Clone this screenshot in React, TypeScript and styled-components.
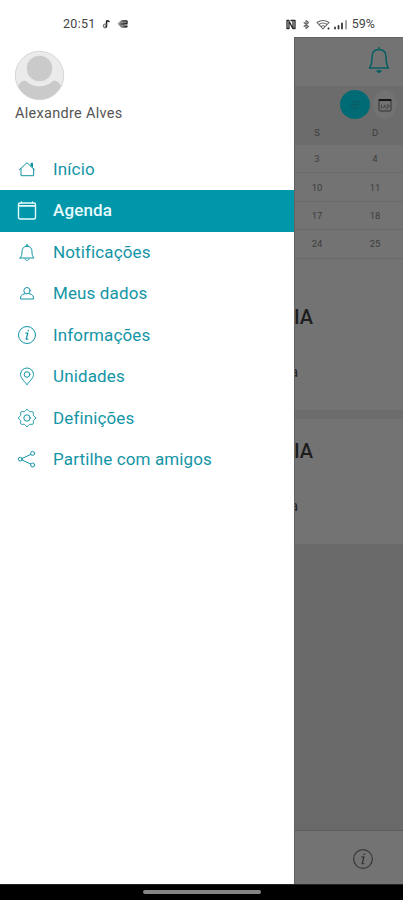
import React from "react";
import styled, { createGlobalStyle } from "styled-components";

const teal = "#1495a6";

const GlobalStyle = createGlobalStyle`
  * { box-sizing: border-box; }
  body { margin: 0; background: #fff; font-family: Roboto, sans-serif; }
`;

const Screen = styled.div`
  width: 403px;
  height: 900px;
  display: grid;
  grid-template-rows: 37px 847px 16px;
  overflow: hidden;
`;

const StatusBar = styled.header`
  display: flex;
  justify-content: space-between;
  align-items: center;
  height: 37px;
  padding: 11px 28px 0 63px;
  font-size: 12.5px;
  color: #444;
`;

const StatusGroup = styled.div`
  display: flex;
  align-items: center;
  height: 26px;
`;

const StatusText = styled.span<{ $spacing: number }>`
  letter-spacing: ${(p) => p.$spacing}px;
  line-height: 26px;
`;

const Body = styled.div`
  display: grid;
  grid-template-columns: 294px 109px;
`;

const Drawer = styled.aside`
  background: #fff;
`;

const Profile = styled.section`
  height: 111.5px;
  padding: 13px 0 0 14px;
`;

const Avatar = styled.svg`
  display: block;
  width: 51px;
  height: 51px;
`;

const UserName = styled.div`
  margin: 3.5px 0 0 1px;
  font-size: 14.5px;
  line-height: 18px;
  letter-spacing: 0.3px;
  color: #555;
`;

const MenuItem = styled.a<{ $active?: boolean }>`
  display: flex;
  align-items: center;
  height: 41.5px;
  padding: 0 0 1px 17px;
  gap: 16px;
  font-size: 17px;
  font-weight: ${(p) => (p.$active ? 500 : 400)};
  letter-spacing: 0.13px;
  color: ${(p) => (p.$active ? "#e8fbfd" : teal)};
  background: ${(p) => (p.$active ? "#0097ab" : "transparent")};
`;

const Icon = styled.svg`
  display: block;
  flex: none;
  fill: none;
  stroke: currentColor;
  stroke-linecap: round;
  stroke-linejoin: round;
`;

const Page = styled.main`
  display: flex;
  flex-direction: column;
  background: #696969;
  border-left: 1px solid #626262;
  overflow: hidden;
`;

const TopBar = styled.div`
  height: 49px;
  flex: none;
  background: #737373;
  border-top: 1px solid #636363;
  display: flex;
  justify-content: flex-end;
  align-items: center;
  padding: 0 11px 5px 0;
  color: #075f63;
`;

const CalendarHead = styled.div`
  height: 59px;
  flex: none;
  background: #6c6c6c;
`;

const CalendarTools = styled.div`
  display: flex;
  height: 37px;
  padding: 4px 0 0 45px;
  gap: 3px;
`;

const ToolButton = styled.div<{ $selected?: boolean }>`
  width: ${(p) => (p.$selected ? 30 : 24)}px;
  height: 29px;
  border-radius: 50%;
  display: grid;
  place-items: center;
  background: ${(p) => (p.$selected ? "#006b75" : "#727272")};
  color: ${(p) => (p.$selected ? "#13575d" : "#333")};
`;

const DayRow = styled.div<{ $height: number; $line?: boolean }>`
  display: grid;
  grid-template-columns: 44px 72px;
  height: ${(p) => p.$height}px;
  flex: none;
  align-items: center;
  text-align: center;
  font-size: 9.5px;
  color: #3d3d3d;
  border-bottom: ${(p) => (p.$line ? "1px solid #6a6a6a" : "none")};
`;

const Calendar = styled.div`
  background: #737373;
  height: 114px;
  flex: none;
`;

const Card = styled.section<{ $height: number; $top: number }>`
  height: ${(p) => p.$height}px;
  flex: none;
  padding-top: ${(p) => p.$top}px;
  background: #737373;
`;

const CardTitle = styled.div`
  margin-left: -1px;
  font-size: 20px;
  font-weight: 500;
  line-height: 24px;
  color: #1d1d1d;
`;

const CardDetail = styled.div`
  margin: 33px 0 0 -5px;
  font-size: 15px;
  line-height: 20px;
  color: #222;
`;

const Divider = styled.div`
  height: 9px;
  flex: none;
  background: #6c6c6c;
`;

const Footer = styled.footer`
  height: 54px;
  margin-top: auto;
  flex: none;
  background: #737373;
  border-top: 1px solid #5d5d5d;
  padding: 17px 0 0 57px;
  color: #383838;
`;

const SystemNav = styled.div`
  background: #000;
  border-top: 1px solid #222;
  display: flex;
  justify-content: center;
  padding-top: 5px;
`;

const HomeHandle = styled.div`
  width: 118px;
  height: 4px;
  border-radius: 2px;
  background: #858585;
`;

type IconName = "home" | "calendar" | "bell" | "user" | "info" | "pin" | "gear" | "share";

const gearPath = Array.from({ length: 65 }, (_, i) => {
  const a = (i * Math.PI) / 32;
  const r = 7.7 + 0.8 * Math.cos(a * 8);
  return `${i ? "L" : "M"}${(10 + r * Math.cos(a)).toFixed(2)} ${(10 + r * Math.sin(a)).toFixed(2)}`;
}).join("") + "Z";

const shapes: Record<IconName, React.ReactNode> = {
  home: <><path d="M2.300 10.800 10 3.700l7.400 7.100M4 9.500v7.200h12.600V9.500" /><path d="M14.200 6.800V4.500h1.200V8" strokeWidth="1.300" /></>,
  calendar: <><rect x="1.500" y="3" width="17" height="16" rx="1.500" strokeWidth="1.400" /><path d="M2 5.800h16" strokeWidth="1.800" /><path d="M4.500 2v1M15.500 2v1" strokeWidth="1.400" /></>,
  bell: <><path d="M3 16h14c-1.600-1.600-2-3-2-6.200 0-3.400-1.700-5.500-5-5.500S5 6.400 5 9.800c0 3.200-.4 4.600-2 6.200ZM9.200 4.100V2.800h1.600v1.300M8 17c.5 2 3.500 2 4 0" /></>,
  user: <><circle cx="10" cy="7.700" r="3.200" /><path d="M7.500 10.800c-3 .5-4.200 2.200-4 5.200h13c.2-3-1-4.700-4-5.200" /></>,
  info: <><circle cx="10" cy="10" r="8.500" /><path d="M9 8.200h1.800l-1.600 6h1.500M11.200 5.500v.3" strokeWidth="1.300" /></>,
  pin: <><path d="M10 18.500C6 14.200 3.500 11.200 3.500 8.500a6.500 6.500 0 0 1 13 0c0 2.700-2.500 5.700-6.500 10Z" /><circle cx="10" cy="8.500" r="2.800" /></>,
  gear: <><path d={gearPath} /><circle cx="10" cy="10" r="3.200" /></>,
  share: <><path d="m5 9.500 8.700-4M5 11l8.700 4" /><circle cx="3.300" cy="10.200" r="1.900" /><circle cx="15.600" cy="4.400" r="2" /><circle cx="15.600" cy="16" r="2" /></>,
};

const LineIcon = ({ name, size = 20, weight = 1 }: { name: IconName; size?: number; weight?: number }) => (
  <Icon viewBox="0 0 20 20" width={size} height={size} strokeWidth={weight}>{shapes[name]}</Icon>
);

const items: { icon: IconName; label: string }[] = [
  { icon: "home", label: "Início" },
  { icon: "calendar", label: "Agenda" },
  { icon: "bell", label: "Notificações" },
  { icon: "user", label: "Meus dados" },
  { icon: "info", label: "Informações" },
  { icon: "pin", label: "Unidades" },
  { icon: "gear", label: "Definições" },
  { icon: "share", label: "Partilhe com amigos" },
];

const weeks = [["3", "4"], ["10", "11"], ["17", "18"], ["24", "25"]];

export default function App() {
  return (
    <>
      <GlobalStyle />
      <Screen>
        <StatusBar>
          <StatusGroup>
            <StatusText $spacing={0.3}>20:51</StatusText>
            <Icon width="34" height="12" viewBox="0 0 34 12">
              <path d="M13 3.500q-2.500-2-2.500 1V8q0 1.500-1.500 1.500" stroke="#222" strokeWidth="1.600" />
              <path d="M10 6.500q-2-1-2.500 1t2 2" stroke="#777" strokeWidth="1.300" />
              <path d="M25.500 2.500H31v7h-5.500L22.500 6Z" fill="#888" stroke="#888" />
              <path d="M27 3h4v2.500h-3M25 6h3M28 8.500h3" stroke="#2d2d2d" strokeWidth="1.200" />
            </Icon>
          </StatusGroup>
          <StatusGroup>
            <Icon width="67" height="13" viewBox="0 0 67 13">
              <path d="M4 2.500H2v8h2V4M6 2.500h4v8H8V4M4.500 4l3 6" stroke="#252525" strokeWidth="1.300" />
              <path d="m19 4.500 4.500 4-2.500 2v-8l2.500 2-4.500 4" stroke="#666" strokeWidth="1.100" />
              <path d="M32 4.500q6-4 12 0L38 11ZM34 6.500q4-3 8 0M36 8.500q2-1.500 4 0" stroke="#666" strokeWidth="1.100" />
              <path d="M43.500 10.500v0" stroke="#222" strokeWidth="2" />
              <path d="M50 9.500v1M53.500 8v2.500M57 5.500v5" stroke="#333" strokeWidth="1.800" />
              <path d="M61 3v7.500" stroke="#999" strokeWidth="1.800" />
            </Icon>
            <StatusText $spacing={0}>59%</StatusText>
          </StatusGroup>
        </StatusBar>
        <Body>
          <Drawer>
            <Profile>
              <Avatar viewBox="0 0 51 51">
                <defs><clipPath id="avatar"><circle cx="25.500" cy="25.500" r="24" /></clipPath></defs>
                <circle cx="25.500" cy="25.500" r="24.200" fill="#ebebeb" stroke="#d7d7d7" />
                <g clipPath="url(#avatar)" fill="#cacaca">
                  <path d="M2 51V40c3-7 6-10 10-9 7 7 20 7 27 0 4-1 7 2 10 9v11Z" />
                  <circle cx="25.500" cy="18.500" r="13.300" stroke="#ebebeb" strokeWidth="1" />
                </g>
              </Avatar>
              <UserName>Alexandre Alves</UserName>
            </Profile>
            <nav>
              {items.map(({ icon, label }) => (
                <MenuItem key={label} $active={label === "Agenda"}>
                  <LineIcon name={icon} />
                  {label}
                </MenuItem>
              ))}
            </nav>
          </Drawer>
          <Page>
            <TopBar>
              <Icon width="26" height="30" viewBox="0 0 26 30" strokeWidth="1.500">
                <path d="M3.500 23h19c-2-3-2.500-6-2.500-11 0-5-2.500-7.500-7-7.500S6 7 6 12c0 5-.5 8-2.500 11ZM13 4V2.500" />
                <path d="M11 26h4l-2 1.500Z" fill="currentColor" />
              </Icon>
            </TopBar>
            <CalendarHead>
              <CalendarTools>
                <ToolButton $selected>
                  <Icon width="12" height="12" viewBox="0 0 12 12"><path d="M2 3h8M2 6h8M3 9h6" /></Icon>
                </ToolButton>
                <ToolButton>
                  <Icon width="14" height="14" viewBox="0 0 14 14">
                    <rect x="1" y="1.500" width="12" height="11.500" rx="1" />
                    <path d="M1.500 2h11" strokeWidth="2" stroke="#161616" />
                    <path d="M3.500 7v3M5 10l2-3v3M9 7h2v2H9v2" strokeWidth=".7" />
                  </Icon>
                </ToolButton>
              </CalendarTools>
              <DayRow $height={18}><span>S</span><span>D</span></DayRow>
            </CalendarHead>
            <Calendar>
              {weeks.map((week) => (
                <DayRow key={week[0]} $height={28.4} $line>
                  {week.map((day) => <span key={day}>{day}</span>)}
                </DayRow>
              ))}
            </Calendar>
            <Card $height={151} $top={46}>
              <CardTitle>IA</CardTitle>
              <CardDetail>a</CardDetail>
            </Card>
            <Divider />
            <Card $height={125} $top={20}>
              <CardTitle>IA</CardTitle>
              <CardDetail>a</CardDetail>
            </Card>
            <Footer><LineIcon name="info" size={22} weight={1.1} /></Footer>
          </Page>
        </Body>
        <SystemNav><HomeHandle /></SystemNav>
      </Screen>
    </>
  );
}
